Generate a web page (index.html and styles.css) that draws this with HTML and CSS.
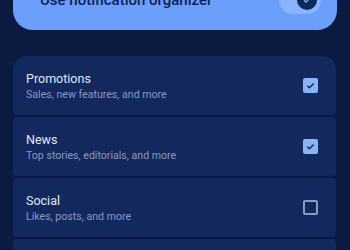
FILE: index.html
```html
<!DOCTYPE html>
<html lang="en">

<head>
    <meta charset="UTF-8">
    <meta name="viewport" content="width=device-width, initial-scale=1.0">
    <title>Notification categories</title>
    <link rel="stylesheet" href="styles.css">
</head>

<body>
    <div class="organizer">
        <span class="organizer-label">Use notification organizer</span>
        <div class="toggle">
            <div class="toggle-thumb">
                <svg width="10" height="10" viewBox="0 0 24 24"><path d="M5 12.5l4.5 4.5L19 7.5" fill="none" stroke="#8ab4f8" stroke-width="3"/></svg>
            </div>
        </div>
    </div>

    <div class="list">
        <div class="item">
            <div class="item-text">
                <div class="item-title">Promotions</div>
                <div class="item-sub">Sales, new features, and more</div>
            </div>
            <div class="check checked">
                <svg width="13" height="13" viewBox="0 0 24 24"><path d="M5 12.5l4.5 4.5L19 7.5" fill="none" stroke="#0f2557" stroke-width="3"/></svg>
            </div>
        </div>
        <div class="item">
            <div class="item-text">
                <div class="item-title">News</div>
                <div class="item-sub">Top stories, editorials, and more</div>
            </div>
            <div class="check checked">
                <svg width="13" height="13" viewBox="0 0 24 24"><path d="M5 12.5l4.5 4.5L19 7.5" fill="none" stroke="#0f2557" stroke-width="3"/></svg>
            </div>
        </div>
        <div class="item">
            <div class="item-text">
                <div class="item-title">Social</div>
                <div class="item-sub">Likes, posts, and more</div>
            </div>
            <div class="check"></div>
        </div>
        <div class="item"></div>
    </div>
</body>

</html>
```

FILE: styles.css
```css
body {
    font-family: Roboto, "Noto Sans", sans-serif;
    background-color: #0b1a41;
    margin: 0;
    padding: 0;
    overflow: hidden;
}

.organizer {
    background-color: #6c9ffb;
    margin: -30px 13px 0 13px;
    height: 60px;
    border-radius: 0 0 20px 20px;
    display: flex;
    align-items: center;
    justify-content: space-between;
    padding: 0 16px 0 27px;
}

.organizer-label {
    color: #0c2154;
    font-size: 15px;
    font-weight: 500;
}

.toggle {
    width: 42px;
    height: 28px;
    border-radius: 14px;
    background-color: #8ab4fc;
    display: flex;
    align-items: center;
    justify-content: flex-end;
    padding: 0 4px;
    box-sizing: border-box;
}

.toggle-thumb {
    width: 20px;
    height: 20px;
    border-radius: 50%;
    background-color: #0d2a5c;
    display: flex;
    align-items: center;
    justify-content: center;
}

.list {
    margin: 26px 14px 0 13px;
    display: flex;
    flex-direction: column;
    gap: 2px;
}

.item {
    background-color: #13295e;
    height: 59px;
    border-radius: 4px;
    display: flex;
    align-items: center;
    justify-content: space-between;
    padding: 0 18px 0 13px;
}

.item:first-child {
    border-radius: 14px 14px 4px 4px;
}

.item-title {
    color: #e3e7f6;
    font-size: 12.5px;
    line-height: 17px;
}

.item-sub {
    color: #8a97c2;
    font-size: 10.6px;
    line-height: 15px;
}

.check {
    width: 15px;
    height: 15px;
    box-sizing: border-box;
    border: 2px solid #8c9ac8;
    border-radius: 2px;
    display: flex;
    align-items: center;
    justify-content: center;
}

.check.checked {
    background-color: #8ab4f8;
    border-color: #8ab4f8;
}
```
